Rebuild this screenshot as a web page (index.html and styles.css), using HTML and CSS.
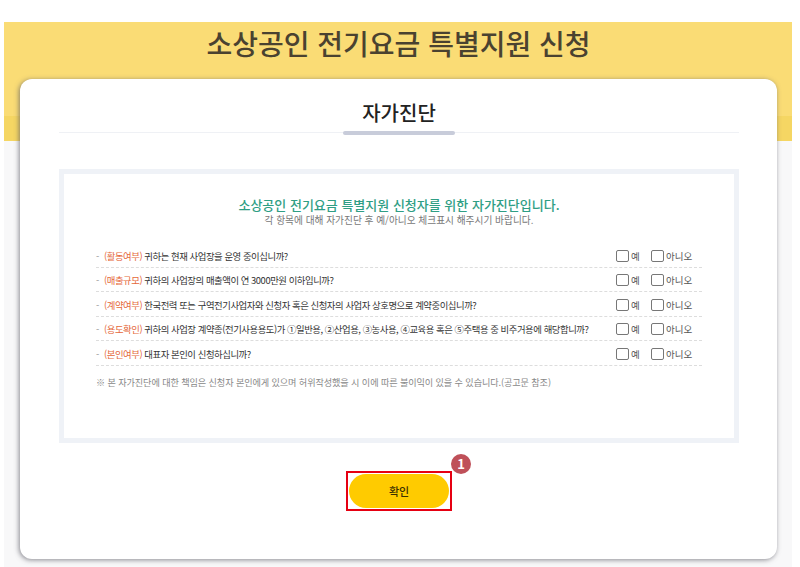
FILE: index.html
```html
<!DOCTYPE html>
<html lang="ko">
<head>
<meta charset="utf-8">
<title>소상공인 전기요금 특별지원 신청</title>
<link rel="stylesheet" href="styles.css">
</head>
<body>
<div class="page">
  <h1 class="page-title">소상공인 전기요금 특별지원 신청</h1>
  <div class="card">
    <div class="card-head">
      <h2>자가진단</h2>
    </div>
    <div class="panel">
      <p class="panel-title">소상공인 전기요금 특별지원 신청자를 위한 자가진단입니다.</p>
      <p class="panel-sub">각 항목에 대해 자가진단 후 예/아니오 체크표시 해주시기 바랍니다.</p>
      <ul class="checks">
        <li>
          <span class="dash">-</span>
          <span class="question"><em>(활동여부)</em> 귀하는 현재 사업장을 운영 중이십니까?</span>
          <label class="opt opt-yes"><i class="box"></i>예</label>
          <label class="opt"><i class="box"></i>아니오</label>
        </li>
        <li>
          <span class="dash">-</span>
          <span class="question"><em>(매출규모)</em> 귀하의 사업장의 매출액이 연 3000만원 이하입니까?</span>
          <label class="opt opt-yes"><i class="box"></i>예</label>
          <label class="opt"><i class="box"></i>아니오</label>
        </li>
        <li>
          <span class="dash">-</span>
          <span class="question"><em>(계약여부)</em> 한국전력 또는 구역전기사업자와 신청자 혹은 신청자의 사업자 상호명으로 계약중이십니까?</span>
          <label class="opt opt-yes"><i class="box"></i>예</label>
          <label class="opt"><i class="box"></i>아니오</label>
        </li>
        <li>
          <span class="dash">-</span>
          <span class="question"><em>(용도확인)</em> 귀하의 사업장 계약종(전기사용용도)가 ①일반용, ②산업용, ③농사용, ④교육용 혹은 ⑤주택용 중 비주거용에 해당합니까?</span>
          <label class="opt opt-yes"><i class="box"></i>예</label>
          <label class="opt"><i class="box"></i>아니오</label>
        </li>
        <li>
          <span class="dash">-</span>
          <span class="question"><em>(본인여부)</em> 대표자 본인이 신청하십니까?</span>
          <label class="opt opt-yes"><i class="box"></i>예</label>
          <label class="opt"><i class="box"></i>아니오</label>
        </li>
      </ul>
      <p class="note">※ 본 자가진단에 대한 책임은 신청자 본인에게 있으며 허위작성했을 시 이에 따른 불이익이 있을 수 있습니다.(공고문 참조)</p>
    </div>
    <div class="actions">
      <div class="highlight">
        <button class="confirm">확인</button>
        <span class="step">1</span>
      </div>
    </div>
  </div>
</div>
</body>
</html>
```

FILE: styles.css
```css
* {
  box-sizing: border-box;
}

html,
body {
  height: 100%;
}

body {
  margin: 0;
  padding: 22px 8px 0 4px;
  background: #fff;
  font-family: "Noto Sans CJK KR", "Noto Sans", sans-serif;
  overflow: hidden;
}

.page {
  height: 545px;
  padding: 0 15px 0 16px;
  background: linear-gradient(#fadc75 0, #fadc75 94px, #f5d663 94px, #f5d663 119px, #f8f8f9 119px);
}

.page-title {
  margin: 0;
  height: 57px;
  padding-top: 2px;
  font-size: 28px;
  font-weight: 500;
  line-height: 38px;
  text-align: center;
  color: #4a4230;
}

.card {
  height: 480px;
  padding: 0 38px 0 39px;
  background: #fff;
  border-radius: 12px;
  box-shadow: -1px 1px 5px rgba(90, 90, 100, 0.7);
}

.card-head {
  height: 54px;
  border-bottom: 1px solid #eff1f5;
  text-align: center;
  position: relative;
}

.card-head h2 {
  margin: 0;
  padding-top: 20px;
  font-size: 20px;
  font-weight: 500;
  line-height: 28px;
  color: #222;
}

.card-head::after {
  content: "";
  position: absolute;
  left: 284px;
  bottom: -3px;
  width: 112px;
  height: 4px;
  border-radius: 2px;
  background: #c8ccda;
}

.panel {
  margin-top: 36px;
  height: 274px;
  padding: 22px 32px 0;
  border: 5px solid #eff2f7;
}

.panel-title {
  margin: 0;
  font-size: 13px;
  font-weight: 500;
  line-height: 18px;
  text-align: center;
  color: #2f9e84;
}

.panel-sub {
  margin: 0;
  font-size: 9.7px;
  line-height: 12px;
  text-align: center;
  color: #777;
}

.checks {
  margin: 17px 0 0;
  padding: 0;
  list-style: none;
}

.checks li {
  display: flex;
  align-items: center;
  height: 24.5px;
  padding-top: 2px;
  border-bottom: 1px dashed #ddd;
  font-size: 9.4px;
  letter-spacing: -0.45px;
  color: #333;
}

.dash {
  width: 8px;
  color: #999;
}

.question {
  flex: 1;
  white-space: nowrap;
}

.question em {
  font-style: normal;
  color: #e5683a;
}

.opt {
  display: flex;
  align-items: center;
  gap: 2px;
  width: 51px;
  font-size: 9.5px;
  letter-spacing: 0;
  white-space: nowrap;
  color: #555;
}

.opt-yes {
  width: 35px;
}

.box {
  width: 13px;
  height: 12px;
  border: 1px solid #777;
  border-radius: 2px;
  background: #fff;
}

.note {
  margin: 10px 0 0;
  font-size: 9.15px;
  letter-spacing: -0.1px;
  line-height: 13px;
  white-space: nowrap;
  color: #888;
}

.actions {
  display: flex;
  justify-content: center;
  padding-top: 28px;
}

.highlight {
  position: relative;
  width: 106px;
  height: 40px;
  padding: 1px;
  border: 2px solid #e60012;
}

.confirm {
  display: block;
  width: 100%;
  height: 100%;
  padding: 0;
  border: none;
  border-radius: 17px;
  background: #ffcb00;
  font-family: inherit;
  font-size: 11px;
  font-weight: 500;
  color: #3a3000;
}

.step {
  position: absolute;
  top: -19px;
  right: -21px;
  width: 20px;
  height: 20px;
  border-radius: 50%;
  background: #bf5059;
  font-size: 13px;
  font-weight: 700;
  line-height: 20px;
  text-align: center;
  color: #fff;
}
```
